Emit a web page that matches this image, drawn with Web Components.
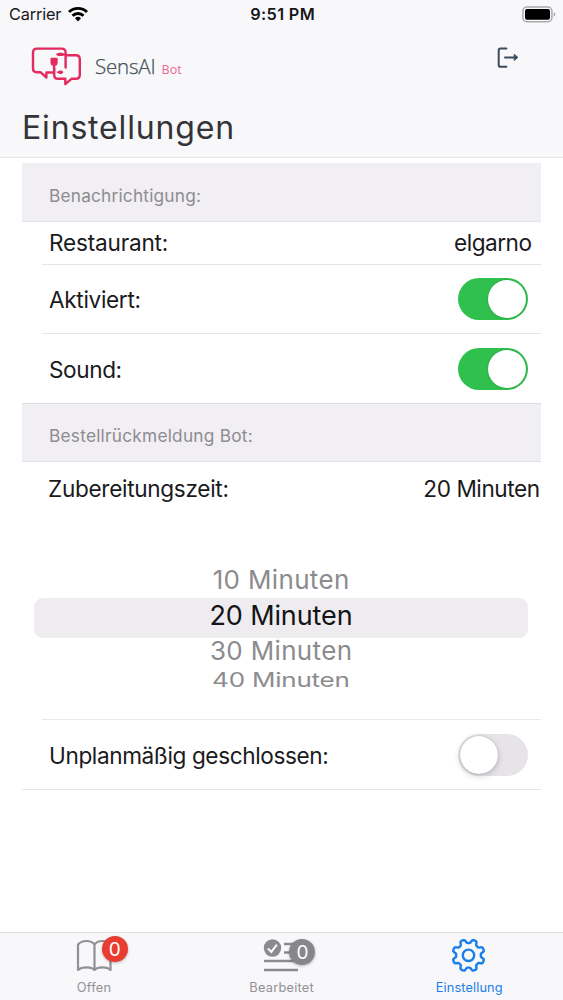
<!DOCTYPE html>
<html lang="de">
<head>
<meta charset="utf-8">
<title>SensAI Bot – Einstellungen</title>
<style>
html,body{margin:0;height:100%;background:#fff}
body{font-family:Inter,"Liberation Sans",sans-serif;color:#1a1a1c}
</style>
</head>
<body>
<settings-screen></settings-screen>
<script>
const define = (name, html, setup) => customElements.define(name, class extends HTMLElement {
  connectedCallback() {
    if (this.shadowRoot) return;
    const t = document.createElement('template');
    t.innerHTML = html;
    this.attachShadow({mode: 'open'}).append(t.content.cloneNode(true));
    if (setup) setup(this, this.shadowRoot);
  }
});

/* A single line of text whose tracking is spread to the width in "w". */
const fitText = (host) => {
  const span = host.shadowRoot.querySelector('span');
  const n = host.textContent.length;
  const w = parseFloat(host.getAttribute('w'));
  span.style.letterSpacing = '0';
  const gap = (w - span.offsetWidth) / (n - 1);
  span.style.letterSpacing = gap.toFixed(3) + 'px';
  span.style.marginRight = (-gap).toFixed(3) + 'px';
};
define('tracked-text', `<style>
:host{display:inline-block;white-space:nowrap;line-height:1.2}
span{display:inline-block}
</style><span><slot></slot></span>`, fitText);

define('status-bar', `<style>
:host{display:grid;grid-template-columns:1fr auto 1fr;align-items:center;height:28px;padding:0 7px 0 9px;font-size:16.3px;color:#18181a}
.left{display:flex;align-items:center;gap:7px;padding-top:1px}
b{font-weight:600;padding-top:1px}
.bat{justify-self:end}
svg{display:block}
</style>
<div class="left"><tracked-text w="52">Carrier</tracked-text>
<svg width="20" height="16" viewBox="0 0 20 16"><g fill="none" stroke="#000" stroke-width="2.9"><path d="M1 6.1a12.7 12.7 0 0 1 18 0"/><path d="M4.5 9.8a7.8 7.8 0 0 1 11 0"/></g><path d="M10 15.4l-3-3.1a4.3 4.3 0 0 1 6 0z"/></svg></div>
<b><tracked-text w="64">9:51 PM</tracked-text></b>
<svg class="bat" width="34" height="17" viewBox="0 0 34 17"><rect x=".9" y="1" width="29" height="14.7" rx="4" fill="none" stroke="#aaa9ad" stroke-width="1.5"/><rect x="3" y="3" width="25" height="10.8" rx="2" fill="#000"/><path d="M31.7 6.2q1.7.6 1.7 2.2t-1.7 2.2z" fill="#aaa9ad"/></svg>`);

define('brand-logo', `<style>
:host{display:flex;align-items:center;font-family:"Open Sans","Noto Sans",sans-serif}
svg{display:block;margin-right:13px}
.name{font-size:20.5px;font-weight:300;color:#44525a;-webkit-text-stroke:.25px #44525a}
.bot{font-size:12.5px;color:#ee6a91;margin:5px 0 0 6px}
</style>
<svg width="51" height="39" viewBox="0 0 51 39" fill="none" stroke="#e22a5f" stroke-width="2.4" stroke-linejoin="round" stroke-linecap="round"><path d="M34.6 20.6V5.6q0-4-4-4H6q-4 0-4 4v15.6q0 4 4 4h3.4l6 5.3v-5h6.2"/><path d="M34.6 8.2h10.2q4 0 4 4v15.6q0 4-4 4h-4.3l-6.2 5.3v-5.3H27q-3.8 0-3.8-3.8v-6"/><path d="M20.7 12v3.5q0 2.4 2.4 2.4t2.4-2.4V12zM23.1 18v5" fill="#e22a5f"/><path d="M27.8 7.4h3.4M28.8 25.2h1.4" stroke-width="3.4"/><path d="M26 7.4h8M26.6 25.2h4.8" stroke-width="1.6"/></svg>
<tracked-text class="name" w="61">SensAI</tracked-text><tracked-text class="bot" w="20">Bot</tracked-text>`);

define('page-header', `<style>
:host{display:flex;flex-direction:column;box-sizing:border-box;height:158px;background:#f8f7fa;border-bottom:1px solid #e6e5e8}
.bar{display:flex;justify-content:space-between;align-items:flex-start;padding:19px 43px 0 31px;height:62px;box-sizing:border-box}
h1{margin:19px 0 0 22px;font-weight:400;font-size:32px;line-height:1.2;color:#343438}
svg{display:block}
</style>
<status-bar></status-bar>
<div class="bar"><brand-logo></brand-logo>
<svg width="23" height="22" viewBox="0 0 23 22" fill="none" stroke="#3c4b5b" stroke-width="2" stroke-linecap="round" stroke-linejoin="round"><path d="M9.4 1.4H3.5Q1.7 1.4 1.7 3.2v14.7q0 1.8 1.8 1.8h5.9M8 10.4h10"/><path d="M17.5 7.6l3.4 2.8-3.4 2.8z" fill="#3c4b5b" stroke-width="1"/></svg></div>
<h1><slot></slot></h1>`);

define('section-header', `<style>
:host{display:flex;align-items:center;box-sizing:border-box;height:58px;padding:8px 0 0 27px;background:#f1eef4;font-size:17.3px;color:#8d8c91}
</style><slot></slot>`);

define('setting-row', `<style>
:host{display:flex;box-sizing:border-box;align-items:center;justify-content:space-between;height:70px;margin-left:20px;padding:0 13px 0 7px;border-bottom:1px solid #e5e4e7;font-size:22.6px}
</style><slot></slot><slot name="value"></slot>`);

define('toggle-switch', `<style>
:host{display:block;box-sizing:border-box;width:70px;height:42px;border-radius:21px;background:#e6e4e8;padding:2px}
i{display:block;width:38px;height:38px;border-radius:50%;background:#fff;box-shadow:0 2px 6px #0003,0 0 1px #0005}
:host([checked]){background:#2fc04e}
:host([checked]) i{margin-left:28px;box-shadow:0 0 2px #0004}
</style><i></i>`);

define('minute-picker', `<style>
:host{display:flex;flex-direction:column;align-items:flex-start;height:204px;box-sizing:border-box;margin-left:20px;padding:46px 0 0;border-bottom:1px solid #e9e8eb;color:#8c8b8f;font-size:26px}
div{height:36px;display:flex;align-items:center;justify-content:center;width:494px;margin-left:-8px}
.sel{height:40px;border-radius:9px;background:#eeecef;color:#141416;font-size:27px}
.sel tracked-text{transform:translateY(-2px)}
.next{height:25px}
.far{height:34px}
.far tracked-text{transform:scaleY(.75)}
</style>
<div><tracked-text w="137">10 Minuten</tracked-text></div>
<div class="sel"><tracked-text w="143">20 Minuten</tracked-text></div>
<div class="next"><tracked-text w="142">30 Minuten</tracked-text></div>
<div class="far"><tracked-text w="138">40 Minuten</tracked-text></div>`);

define('tab-item', `<style>
:host{display:flex;flex-direction:column;align-items:center;color:#929196;font-size:12.8px}
:host([active]){color:#1a7fea}
.icon{position:relative;height:47px;width:60px}
</style><div class="icon"><slot name="icon"></slot><slot name="badge"></slot></div><slot></slot>`);

define('count-badge', `<style>
:host{position:absolute;left:38px;top:3px;width:26px;height:26px;border-radius:50%;display:flex;align-items:center;justify-content:center;background:#e93c31;color:#fff;font-size:19px;box-shadow:0 1px 3px #0004}
:host([muted]){background:#87868a;left:38px;top:6px}
</style><slot></slot>`);

define('tab-bar', `<style>
:host{display:grid;grid-template-columns:repeat(3,1fr);box-sizing:border-box;height:68px;background:#f8f7fa;border-top:1px solid #e0dfe2}
svg{display:block}
</style>
<tab-item><svg slot="icon" width="60" height="47" viewBox="0 0 60 47" fill="none" stroke="#919095" stroke-width="2.2" stroke-linejoin="round"><path d="M30.5 11.5Q28 8 22.5 8T14 11.5v25.5Q17 34.4 22.5 34.4t8 2.6Q33 34.4 38.5 34.4t8 2.6v-25.5Q44 8 38.5 8t-8 3.5v25.5"/></svg>
<count-badge slot="badge">0</count-badge><tracked-text w="34">Offen</tracked-text></tab-item>
<tab-item><svg slot="icon" width="60" height="47" viewBox="0 0 60 47" fill="none" stroke="#8b8a8f" stroke-width="2.5"><circle cx="21.5" cy="15" r="8.7" fill="#8b8a8f" stroke="none"/><path d="M17 15.5l3.3 3.4 5.6-7.2" stroke="#f8f7fa" stroke-width="2.1"/><path d="M33 11h10M33 19.500h10M13 28h34M13 37h34"/></svg>
<count-badge muted slot="badge">0</count-badge><tracked-text w="64">Bearbeitet</tracked-text></tab-item>
<tab-item active><svg slot="icon" width="60" height="47" viewBox="0 0 60 47" fill="none" stroke="#1a7fea" stroke-width="2.4" stroke-linejoin="round"><path class="gear"/><circle cx="29.5" cy="22.3" r="5.7"/></svg><tracked-text w="67">Einstellung</tracked-text></tab-item>`, (host, root) => {
  const pts = [];
  for (let a = 0; a < 360; a += 3) {
    const t = a * Math.PI / 180;
    const r = 14.2 + 1.9 * Math.tanh(2.3 * Math.cos(8 * (t - Math.PI / 8)));
    pts.push((29.5 + r * Math.cos(t)).toFixed(2) + ' ' + (22.3 + r * Math.sin(t)).toFixed(2));
  }
  root.querySelector('.gear').setAttribute('d', 'M' + pts.join('L') + 'Z');
});

define('settings-screen', `<style>
:host{display:flex;flex-direction:column;width:563px;height:1000px;overflow:hidden;background:#fff}
main{flex:1;padding:5px 22px 0}
.first{height:59px;border-bottom:1px solid #e5e4e8}
.name{height:43px;padding-right:9px}
.active{height:69px}
.active tracked-text,.sound tracked-text,.last tracked-text{padding-top:2px}
.sound{margin-left:0;padding-left:27px;border-color:#dedce1}
.second{border-bottom:1px solid #e2e0e5}
.time{height:54px;border:0;padding:0 1px 0 6px}
.last{margin-left:0;padding-left:27px}
</style>
<page-header><tracked-text w="212">Einstellungen</tracked-text></page-header>
<main>
<section-header class="first"><tracked-text w="152">Benachrichtigung:</tracked-text></section-header>
<setting-row class="name"><tracked-text w="119">Restaurant:</tracked-text><tracked-text slot="value" w="78">elgarno</tracked-text></setting-row>
<setting-row class="active"><tracked-text w="92">Aktiviert:</tracked-text><toggle-switch slot="value" checked></toggle-switch></setting-row>
<setting-row class="sound"><tracked-text w="73">Sound:</tracked-text><toggle-switch slot="value" checked></toggle-switch></setting-row>
<section-header class="second"><tracked-text w="204">Bestellrückmeldung Bot:</tracked-text></section-header>
<setting-row class="time"><tracked-text w="181">Zubereitungszeit:</tracked-text><tracked-text slot="value" w="117">20 Minuten</tracked-text></setting-row>
<minute-picker></minute-picker>
<setting-row class="last"><tracked-text w="280">Unplanmäßig geschlossen:</tracked-text><toggle-switch slot="value"></toggle-switch></setting-row>
</main>
<tab-bar></tab-bar>`);
</script>
</body>
</html>
